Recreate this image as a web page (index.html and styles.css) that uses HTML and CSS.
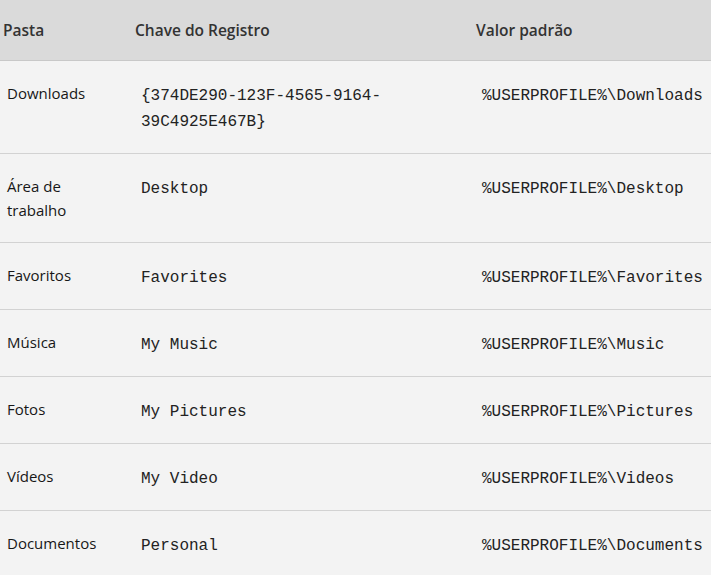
FILE: index.html
```html
<!DOCTYPE html>
<html lang="pt-BR">
<head>
    <meta charset="UTF-8">
    <meta name="viewport" content="width=device-width, initial-scale=1.0">
    <title>Pastas do usuário</title>
    <link rel="stylesheet" href="styles.css">
</head>
<body>
    <table class="folders">
        <colgroup>
            <col class="col-folder">
            <col class="col-key">
            <col>
        </colgroup>
        <thead>
            <tr>
                <th>Pasta</th>
                <th>Chave do Registro</th>
                <th>Valor padrão</th>
            </tr>
        </thead>
        <tbody>
            <tr>
                <td>Downloads</td>
                <td><code>{374DE290-123F-4565-9164-39C4925E467B}</code></td>
                <td><code>%USERPROFILE%\Downloads</code></td>
            </tr>
            <tr>
                <td>Área de trabalho</td>
                <td><code>Desktop</code></td>
                <td><code>%USERPROFILE%\Desktop</code></td>
            </tr>
            <tr>
                <td>Favoritos</td>
                <td><code>Favorites</code></td>
                <td><code>%USERPROFILE%\Favorites</code></td>
            </tr>
            <tr>
                <td>Música</td>
                <td><code>My Music</code></td>
                <td><code>%USERPROFILE%\Music</code></td>
            </tr>
            <tr>
                <td>Fotos</td>
                <td><code>My Pictures</code></td>
                <td><code>%USERPROFILE%\Pictures</code></td>
            </tr>
            <tr>
                <td>Vídeos</td>
                <td><code>My Video</code></td>
                <td><code>%USERPROFILE%\Videos</code></td>
            </tr>
            <tr>
                <td>Documentos</td>
                <td><code>Personal</code></td>
                <td><code>%USERPROFILE%\Documents</code></td>
            </tr>
        </tbody>
    </table>
</body>
</html>
```

FILE: styles.css
```css
body {
    margin: 0;
    background-color: #f3f3f3;
    font-family: "Open Sans", "Noto Sans", Arial, sans-serif;
    font-size: 15px;
    color: #171717;
    overflow: hidden;
}
.folders {
    width: 730px;
    border-collapse: collapse;
    table-layout: fixed;
}
.col-folder {
    width: 132px;
}
.col-key {
    width: 341px;
}
th {
    height: 60px;
    padding: 0 3px;
    background-color: #dadada;
    border-bottom: 1px solid #c8c8c8;
    text-align: left;
    font-size: 15.5px;
    font-weight: 600;
    color: #333;
}
td {
    padding: 20px 12px 20px 7px;
    vertical-align: top;
    line-height: 24px;
    border-bottom: 1px solid #d2d2d2;
}
code {
    display: block;
    padding: 2px 0 0 2px;
    margin-bottom: -2px;
    font-family: "Liberation Mono", "Courier New", monospace;
    font-size: 16px;
    line-height: 26px;
    color: #222;
    word-break: break-word;
}
```
